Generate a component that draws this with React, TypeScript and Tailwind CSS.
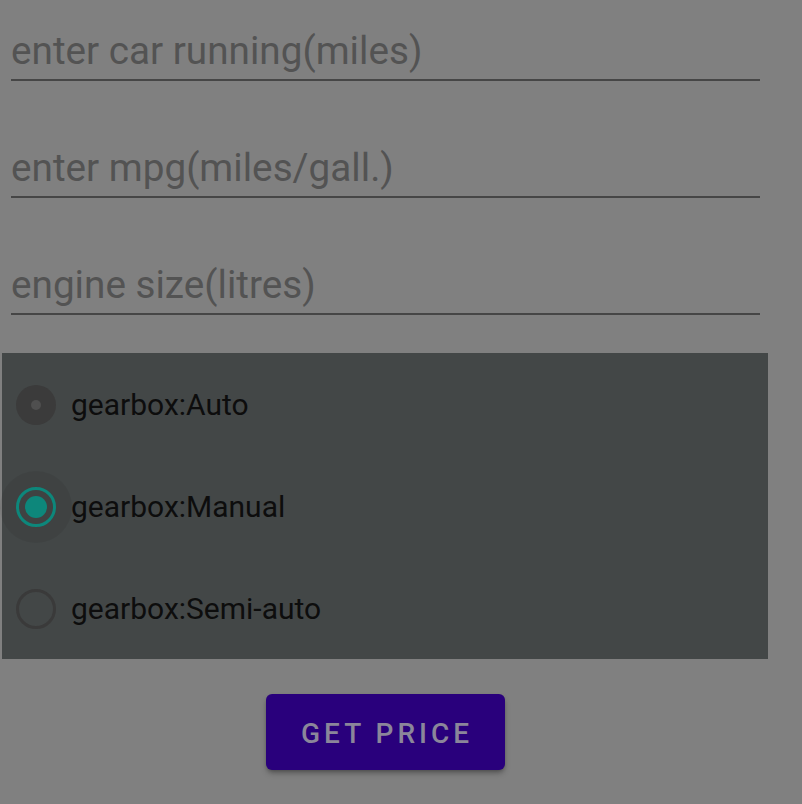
import React from "react";

const fields = ["enter car running(miles)", "enter mpg(miles/gall.)", "engine size(litres)"];
const gaps = ["mt-[28px]", "mt-[64px]", "mt-[64px]"];

function Radio({ kind }: { kind: "disabled" | "checked" | "empty" }) {
  if (kind === "disabled")
    return (
      <div className="w-10 h-10 rounded-full bg-[#3b3b3b] flex items-center justify-center shrink-0">
        <div className="w-[10px] h-[10px] rounded-full bg-[#4f4f4f]" />
      </div>
    );
  if (kind === "checked")
    return (
      <div className="relative w-10 h-10 shrink-0">
        <div className="absolute -left-4 -top-4 w-[72px] h-[72px] rounded-full bg-black/[0.06]" />
        <div className="relative w-10 h-10 rounded-full border-[3.5px] border-[#0d877b] flex items-center justify-center">
          <div className="w-[22px] h-[22px] rounded-full bg-[#0d877b]" />
        </div>
      </div>
    );
  return <div className="w-10 h-10 rounded-full border-[3px] border-[#3a3a3a] shrink-0" />;
}

export default function App() {
  const options: { label: string; kind: "disabled" | "checked" | "empty" }[] = [
    { label: "gearbox:Auto", kind: "disabled" },
    { label: "gearbox:Manual", kind: "checked" },
    { label: "gearbox:Semi-auto", kind: "empty" },
  ];

  return (
    <div className="w-[802px] h-[804px] bg-[#808080] overflow-hidden" style={{ fontFamily: "Roboto, 'Noto Sans', sans-serif" }}>
      <div className="pl-[11px] w-[760px]">
        {fields.map((f, i) => (
          <div key={f} className={`${gaps[i]} pb-[5px] border-b-2 border-[#464646] text-[38.7px] leading-[46px] text-[#535353]`}>
            {f}
          </div>
        ))}
      </div>

      <div className="ml-[2px] mt-[38px] w-[766px]">
        <div className="h-[306px] bg-[#434747] pt-px">
          {options.map((o) => (
            <div key={o.label} className="h-[102px] flex items-center pl-[14px] gap-[15px]">
              <Radio kind={o.kind} />
              <span className="text-[30px] leading-[36px] text-[#0d0d0d]">{o.label}</span>
            </div>
          ))}
        </div>

        <div className="flex justify-center mt-[35px]">
          <button className="w-[239px] h-[76px] rounded-[6px] bg-[#29007c] shadow-md shadow-black/30 text-[28px] font-medium tracking-[4px] text-[#8b869a] pl-[4px] pt-[3px]">
            GET PRICE
          </button>
        </div>
      </div>
    </div>
  );
}
